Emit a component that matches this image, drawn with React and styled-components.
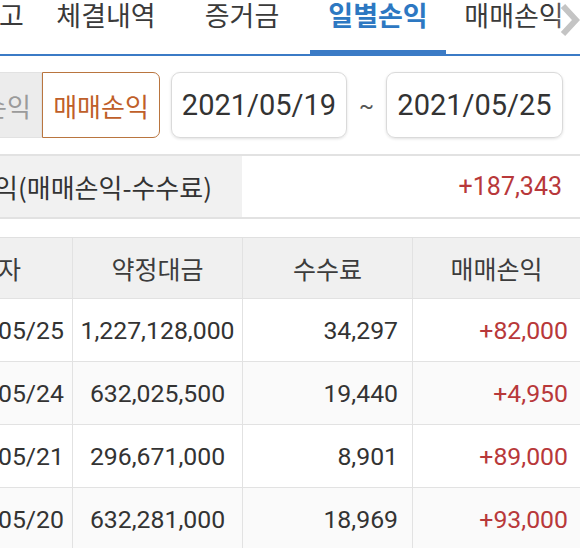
import React from 'react'
import styled, { createGlobalStyle } from 'styled-components'

const GlobalStyle = createGlobalStyle`
  html, body {
    margin: 0;
    padding: 0;
    background: #fff;
  }
  body {
    font-family: 'Noto Sans', 'Noto Sans CJK KR', sans-serif;
    color: #333;
  }
`

const Screen = styled.div`
  position: relative;
  width: 580px;
  height: 548px;
  overflow: hidden;
  background: #fff;
`

// the view is scrolled sideways, so the content starts off the left edge
const Scroller = styled.div`
  width: 656px;
  margin-left: -76px;
`

const TabBar = styled.div`
  display: flex;
  height: 54px;
  padding-left: 36px;
  border-bottom: 2px solid #3b7bc6;
`

const Tab = styled.div`
  position: relative;
  flex: 0 0 ${props => props.width || 136}px;
  text-align: center;
  font-family: 'Noto Sans CJK KR', sans-serif;
  font-size: 27px;
  line-height: 30px;
  white-space: nowrap;
  color: ${props => props.active ? '#2d78c2' : '#3a3a3a'};
  font-weight: ${props => props.active ? 700 : 400};

  &::after {
    content: '';
    display: ${props => props.active ? 'block' : 'none'};
    position: absolute;
    left: 0;
    right: 0;
    bottom: -2px;
    height: 6px;
    background: #3b7bc6;
  }
`

const MoreArrow = styled.div`
  position: absolute;
  top: 0;
  right: 0;
  width: 26px;
  height: 44px;
  display: flex;
  align-items: flex-start;
  justify-content: flex-end;
  padding-top: 3px;
  background: linear-gradient(to right, rgba(255,255,255,0), rgba(255,255,255,0.85));
`

const FilterRow = styled.div`
  display: flex;
  align-items: center;
  margin-top: 16px;
  height: 66px;
`

const Segment = styled.div`
  display: flex;
  height: 66px;
`

const SegmentItem = styled.div`
  width: 118px;
  box-sizing: border-box;
  display: flex;
  align-items: center;
  justify-content: center;
  font-family: 'Noto Sans CJK KR', sans-serif;
  font-size: 26px;
  white-space: nowrap;
  background: ${props => props.selected ? '#fff' : '#ececec'};
  color: ${props => props.selected ? '#bf5f2a' : '#9b9b9b'};
  border: 1px solid ${props => props.selected ? '#b9753f' : '#e2e2e2'};
  border-radius: ${props => props.selected ? '0 7px 7px 0' : '7px 0 0 7px'};
`

const DateBox = styled.div`
  box-sizing: border-box;
  width: ${props => props.width}px;
  height: 66px;
  margin-left: ${props => props.gap || 0}px;
  display: flex;
  align-items: center;
  justify-content: center;
  border: 1px solid #dadada;
  border-radius: 9px;
  box-shadow: 0 1px 3px rgba(0, 0, 0, 0.12);
  font-family: 'Roboto', sans-serif;
  font-size: 29px;
  color: #333;
`

const Tilde = styled.div`
  width: 39px;
  text-align: center;
  font-family: 'Roboto', sans-serif;
  font-size: 22px;
  color: #555;
`

const Summary = styled.div`
  display: flex;
  margin-top: 16px;
  height: 65px;
  box-sizing: border-box;
  border-top: 2px solid #e2e2e2;
  border-bottom: 2px solid #e2e2e2;
`

const SummaryLabel = styled.div`
  width: 318px;
  display: flex;
  align-items: center;
  justify-content: flex-end;
  padding-right: 30px;
  box-sizing: border-box;
  white-space: nowrap;
  background: #f1f1f1;
  font-family: 'Noto Sans CJK KR', sans-serif;
  font-size: 26px;
  color: #333;
`

const SummaryValue = styled.div`
  flex: 1;
  display: flex;
  align-items: center;
  justify-content: flex-end;
  padding-right: 18px;
  font-family: 'Roboto', sans-serif;
  font-size: 25px;
  color: #b8383a;
`

const Table = styled.div`
  margin-top: 18px;
  border-top: 1px solid #e0e0e0;
`

const Row = styled.div`
  display: grid;
  grid-template-columns: 148px 170px 170px 168px;
  height: ${props => props.head ? 60 : 62}px;
  background: ${props => props.head ? '#f0f0f0' : props.shade ? '#fafafa' : '#fff'};
  border-bottom: 1px solid #e2e2e2;
`

const Cell = styled.div`
  display: flex;
  align-items: center;
  justify-content: ${props => props.align === 'right' ? 'flex-end' : 'center'};
  padding-right: ${props => props.pad || 0}px;
  border-left: ${props => props.first ? 'none' : '1px solid #e2e2e2'};
  font-family: ${props => props.head ? "'Noto Sans CJK KR', sans-serif" : "'Roboto', sans-serif"};
  font-size: ${props => props.head ? 25 : 24.8}px;
  color: ${props => props.red ? '#b8383a' : props.head ? '#3c3c3c' : '#333'};
  white-space: nowrap;
  overflow: hidden;
`

const rows = [
  { date: '2021/05/25', amount: '1,227,128,000', fee: '34,297', profit: '+82,000' },
  { date: '2021/05/24', amount: '632,025,500', fee: '19,440', profit: '+4,950' },
  { date: '2021/05/21', amount: '296,671,000', fee: '8,901', profit: '+89,000' },
  { date: '2021/05/20', amount: '632,281,000', fee: '18,969', profit: '+93,000' }
]

const tabs = ['체결내역', '증거금', '일별손익', '매매손익']

export default function App () {
  return (
    <Screen>
      <GlobalStyle />
      <Scroller>
        <TabBar>
          <Tab width={78}>잔고</Tab>
          {tabs.map(t => (
            <Tab key={t} active={t === '일별손익'}>{t}</Tab>
          ))}
        </TabBar>

        <FilterRow>
          <Segment>
            <SegmentItem>일별손익</SegmentItem>
            <SegmentItem selected>매매손익</SegmentItem>
          </Segment>
          <DateBox width={176} gap={11}>2021/05/19</DateBox>
          <Tilde>~</Tilde>
          <DateBox width={177}>2021/05/25</DateBox>
        </FilterRow>

        <Summary>
          <SummaryLabel>실현손익(매매손익-수수료)</SummaryLabel>
          <SummaryValue>+187,343</SummaryValue>
        </Summary>

        <Table>
          <Row head>
            <Cell head first>일자</Cell>
            <Cell head>약정대금</Cell>
            <Cell head>수수료</Cell>
            <Cell head>매매손익</Cell>
          </Row>
          {rows.map((r, i) => (
            <Row key={r.date} shade={i % 2 === 1}>
              <Cell first>{r.date}</Cell>
              <Cell>{r.amount}</Cell>
              <Cell align='right' pad={14}>{r.fee}</Cell>
              <Cell align='right' pad={12} red>{r.profit}</Cell>
            </Row>
          ))}
        </Table>
      </Scroller>

      <MoreArrow>
        <svg width='20' height='34' viewBox='0 0 20 34'>
          <polyline points='3,3 16,17 3,31' fill='none' stroke='#c4c4c4' strokeWidth='6' strokeLinejoin='miter' />
        </svg>
      </MoreArrow>
    </Screen>
  )
}
